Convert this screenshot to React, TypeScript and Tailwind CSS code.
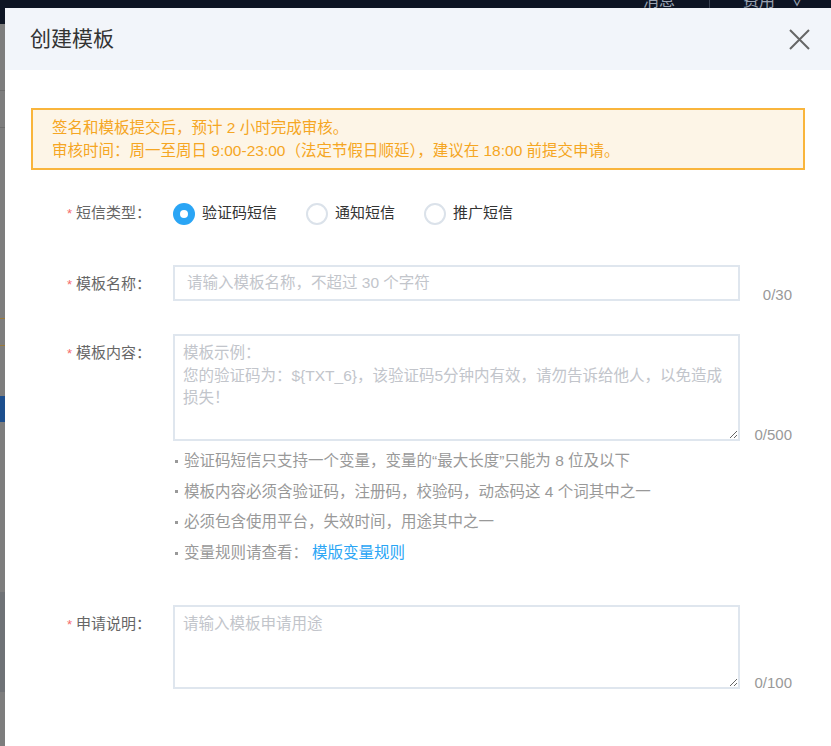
const hints = [
  "验证码短信只支持一个变量，变量的“最大长度”只能为 8 位及以下",
  "模板内容必须含验证码，注册码，校验码，动态码这 4 个词其中之一",
  "必须包含使用平台，失效时间，用途其中之一",
];

const types = [
  { label: "验证码短信", checked: true },
  { label: "通知短信", checked: false },
  { label: "推广短信", checked: false },
];

const Label = ({ text, top = true }: { text: string; top?: boolean }) => (
  <div
    className={`w-[120px] shrink-0 text-right text-[15px] leading-[22px] text-[#666] ${
      top ? "pt-[8px]" : ""
    }`}
  >
    <span className="mr-[4px] text-[13px] text-[#f56c6c]">*</span>
    {text}
  </div>
);

const Counter = ({ text }: { text: string }) => (
  <div className="w-[52px] shrink-0 text-right text-[15px] leading-[12px] text-[#999]">
    {text}
  </div>
);

const Bullet = () => <span className="ml-[2px] mr-[6px] h-[3px] w-[3px] shrink-0 bg-[#999]" />;

const App = () => {
  return (
    <div className="relative h-[746px] w-[831px] overflow-hidden bg-[#7d7d7d] font-['Liberation_Sans','Noto_Sans_CJK_SC',sans-serif]">
      {/* page behind the dialog */}
      <div className="flex h-[24px] items-start bg-[#0e1524] text-[16px] text-[#9aa3b2]">
        <span className="ml-[643px] -mt-[11px]">消息</span>
        <span className="ml-[34px] h-[8px] w-px bg-[#3a4252]" />
        <span className="ml-[33px] -mt-[11px]">费用</span>
        <span className="ml-[14px] -mt-[11px]">∨</span>
      </div>
      <div className="flex flex-col">
        <div className="mt-[66px] h-px bg-[#6d6d6d]" />
        <div className="mt-[36px] h-px bg-[#6d6d6d]" />
        <div className="mt-[190px] h-[28px] border-y border-[#9b7a3a]" />
        <div className="mt-[50px] h-[26px] bg-[#1d4f8e]" />
        <div className="mt-[170px] h-[100px] bg-[#6f7276]" />
      </div>

      {/* dialog */}
      <div className="absolute left-[5px] top-[8px] h-[760px] w-[850px] bg-white">
        <div className="flex h-[62px] items-center bg-[#f2f5fa] pl-[25px] pr-[45px]">
          <h2 className="flex-1 text-[21px] text-[#333]">创建模板</h2>
          <svg width="21" height="21" viewBox="0 0 21 21" className="text-[#666]">
            <path d="M1 1L20 20M20 1L1 20" stroke="currentColor" strokeWidth="2" />
          </svg>
        </div>

        <div className="pl-[26px] pr-[50px] pt-[38px]">
          <div className="w-[774px] border-2 border-[#f9b53c] bg-[#fdf5e7] py-[6px] pl-[19px] text-[15.5px] leading-[23px] text-[#f5a623]">
            <p>签名和模板提交后，预计 2 小时完成审核。</p>
            <p>审核时间：周一至周日 9:00-23:00（法定节假日顺延），建议在 18:00 前提交申请。</p>
          </div>

          <div className="mt-[32px] flex items-center">
            <Label text="短信类型：" top={false} />
            <div className="ml-[22px] flex items-center">
              {types.map((t) => (
                <label key={t.label} className="mr-[29px] flex items-center text-[15px] text-[#333]">
                  {t.checked ? (
                    <span className="flex h-[22px] w-[22px] items-center justify-center rounded-full bg-[#2aa5f5]">
                      <span className="h-[8px] w-[8px] rounded-full bg-white" />
                    </span>
                  ) : (
                    <span className="h-[22px] w-[22px] rounded-full border-2 border-[#dbe2ea]" />
                  )}
                  <span className="ml-[7px]">{t.label}</span>
                </label>
              ))}
            </div>
          </div>

          <div className="mt-[40px] flex items-start">
            <Label text="模板名称：" />
            <div className="ml-[22px] flex items-end">
              <input
                className="h-[36px] w-[567px] border-2 border-[#dfe6ee] pl-[12px] text-[15.5px] outline-none placeholder:text-[#c2c5cb]"
                placeholder="请输入模板名称，不超过 30 个字符"
              />
              <Counter text="0/30" />
            </div>
          </div>

          <div className="mt-[33px] flex items-start">
            <Label text="模板内容：" />
            <div className="ml-[22px]">
              <div className="flex items-end">
                <textarea
                  className="h-[107px] w-[567px] border-2 border-[#dfe6ee] px-[8px] pt-[6px] text-[15.5px] leading-[22.5px] outline-none placeholder:text-[#c2c5cb]"
                  placeholder={"模板示例：\n您的验证码为：${TXT_6}，该验证码5分钟内有效，请勿告诉给他人，以免造成损失！"}
                />
                <Counter text="0/500" />
              </div>
              <ul className="mt-[5px] text-[15.5px] leading-[30.6px] text-[#999]">
                {hints.map((h) => (
                  <li key={h} className="flex items-center">
                    <Bullet />
                    {h}
                  </li>
                ))}
                <li className="flex items-center">
                  <Bullet />
                  变量规则请查看：
                  <a href="#" className="ml-[4px] text-[#2aa5f5]">
                    模版变量规则
                  </a>
                </li>
              </ul>
            </div>
          </div>

          <div className="mt-[37px] flex items-start">
            <Label text="申请说明：" />
            <div className="ml-[22px] flex items-end">
              <textarea
                className="h-[84px] w-[567px] border-2 border-[#dfe6ee] px-[8px] pt-[6px] text-[15.5px] leading-[22.5px] outline-none placeholder:text-[#c2c5cb]"
                placeholder="请输入模板申请用途"
              />
              <Counter text="0/100" />
            </div>
          </div>
        </div>
      </div>
    </div>
  );
};

export default App;
